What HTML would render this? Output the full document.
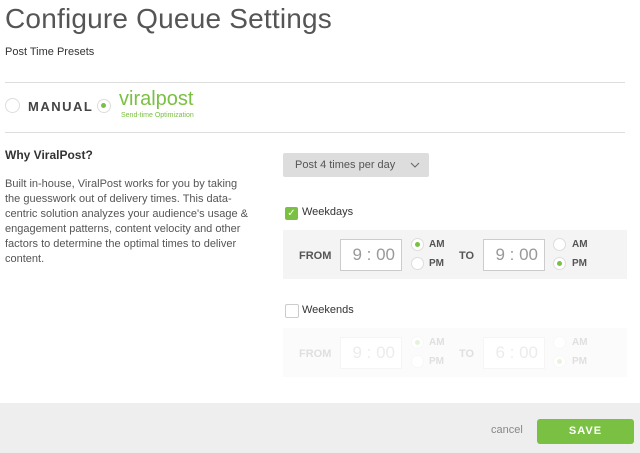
<!DOCTYPE html><html><head><style>
body{margin:0;width:640px;height:453px;overflow:hidden;background:#fff;font-family:"Liberation Sans",sans-serif;color:#333;position:relative}
.a{position:absolute;white-space:nowrap}
.rad{position:absolute;width:13px;height:13px;border:1px solid #ddd;border-radius:50%;background:#fff;box-sizing:border-box}
.rad.on::after{content:"";position:absolute;left:3px;top:3px;width:5px;height:5px;border-radius:50%;background:#7ac143}
.inp{position:absolute;width:62px;height:32px;border:1px solid #ccc;box-sizing:border-box;background:#fff;font-size:17px;color:#999;text-align:right;padding-right:6px;line-height:30px}
.lbl{position:absolute;font-size:11px;font-weight:bold;color:#555}
.sm{position:absolute;font-size:10px;font-weight:bold;color:#555}
</style></head><body>
<div class="a" style="left:5px;top:3px;font-size:28px;color:#555;letter-spacing:0.2px">Configure Queue Settings</div>
<div class="a" style="left:5px;top:46px;font-size:11px">Post Time Presets</div>
<div class="a" style="left:5px;top:82px;width:620px;height:1px;background:#ddd"></div>
<div class="rad" style="left:5px;top:98px;width:15px;height:15px"></div>
<div class="a" style="left:28px;top:99px;font-size:13px;font-weight:bold;letter-spacing:1.5px;color:#444">MANUAL</div>
<div class="rad on" style="left:97px;top:99px;width:14px;height:14px"></div>
<div class="a" style="left:119px;top:88px;font-size:20px;color:#7ac143">viralpost</div>
<div class="a" style="left:121px;top:112px;font-size:7px;color:#7ac143">Send-time Optimization</div>
<div class="a" style="left:5px;top:132px;width:620px;height:1px;background:#ddd"></div>
<div class="a" style="left:5px;top:148px;font-size:12px;font-weight:bold">Why ViralPost?</div>
<div class="a" style="left:5px;top:177px;font-size:11px;line-height:15px;color:#555">Built in-house, ViralPost works for you by taking<br>the guesswork out of delivery times. This data-<br>centric solution analyzes your audience's usage &amp;<br>engagement patterns, content velocity and other<br>factors to determine the optimal times to deliver<br>content.</div>
<div class="a" style="left:283px;top:153px;width:146px;height:24px;background:#ddd;border-radius:2px;font-size:11px;line-height:24px;color:#555"><span style="margin-left:12px">Post 4 times per day</span><svg style="position:absolute;left:127px;top:9px" width="10" height="6"><path d="M1 1L5 5L9 1" stroke="#666" fill="none"/></svg></div>
<div class="a" style="left:285px;top:207px;width:13px;height:13px;background:#7ac143;border-radius:2px;color:#fff;font-size:10px;text-align:center;line-height:13px">✓</div>
<div class="a" style="left:302px;top:206px;font-size:11px">Weekdays</div>
<div class="a" style="left:283px;top:230px;width:344px;height:49px;background:#f4f4f4"></div>
<div class="lbl" style="left:299px;top:250px">FROM</div>
<div class="inp" style="left:340px;top:239px">9 : 00</div>
<div class="rad on" style="left:411px;top:238px"></div><div class="sm" style="left:429px;top:239px">AM</div>
<div class="rad" style="left:411px;top:257px"></div><div class="sm" style="left:429px;top:258px">PM</div>
<div class="lbl" style="left:459px;top:250px">TO</div>
<div class="inp" style="left:483px;top:239px">9 : 00</div>
<div class="rad" style="left:553px;top:238px"></div><div class="sm" style="left:572px;top:239px">AM</div>
<div class="rad on" style="left:553px;top:257px"></div><div class="sm" style="left:572px;top:258px">PM</div>
<div class="a" style="left:285px;top:304px;width:12px;height:12px;border:1px solid #ccc;border-radius:2px"></div>
<div class="a" style="left:302px;top:304px;font-size:11px">Weekends</div>
<div style="position:absolute;left:0;top:0;opacity:0.18">
<div class="a" style="left:283px;top:328px;width:344px;height:49px;background:#eaeaea"></div>
<div class="lbl" style="left:299px;top:348px">FROM</div>
<div class="inp" style="left:340px;top:337px">9 : 00</div>
<div class="rad on" style="left:411px;top:336px"></div><div class="sm" style="left:429px;top:337px">AM</div>
<div class="rad" style="left:411px;top:355px"></div><div class="sm" style="left:429px;top:356px">PM</div>
<div class="lbl" style="left:459px;top:348px">TO</div>
<div class="inp" style="left:483px;top:337px">6 : 00</div>
<div class="rad" style="left:553px;top:336px"></div><div class="sm" style="left:572px;top:337px">AM</div>
<div class="rad on" style="left:553px;top:355px"></div><div class="sm" style="left:572px;top:356px">PM</div>
</div>
<div class="a" style="left:0;top:403px;width:640px;height:50px;background:#eee"></div>
<div class="a" style="left:491px;top:424px;font-size:11px;color:#888">cancel</div>
<div class="a" style="left:537px;top:419px;width:97px;height:25px;background:#7ac143;border-radius:3px;color:#fff;font-weight:bold;font-size:11px;letter-spacing:1px;text-align:center;line-height:25px">SAVE</div>
</body></html>
